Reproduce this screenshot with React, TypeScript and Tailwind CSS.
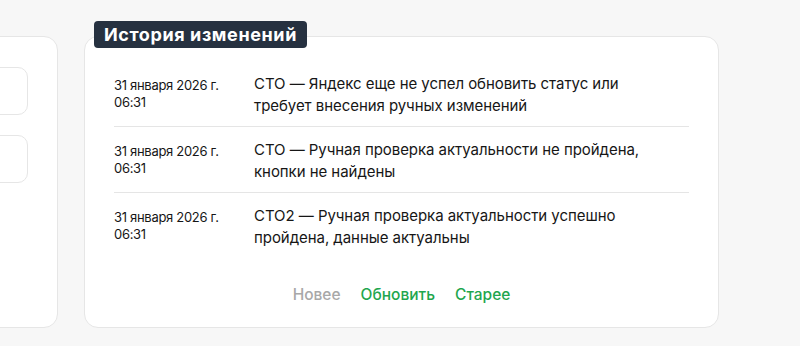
import React from 'react'

type Entry = {
  date: string
  time: string
  text: string
}

const entries: Entry[] = [
  {
    date: '31 января 2026 г.',
    time: '06:31',
    text: 'СТО — Яндекс еще не успел обновить статус или требует внесения ручных изменений',
  },
  {
    date: '31 января 2026 г.',
    time: '06:31',
    text: 'СТО — Ручная проверка актуальности не пройдена, кнопки не найдены',
  },
  {
    date: '31 января 2026 г.',
    time: '06:31',
    text: 'СТО2 — Ручная проверка актуальности успешно пройдена, данные актуальны',
  },
]

export default function App() {
  return (
    <div
      className="w-[800px] h-[346px] overflow-hidden bg-[#f7f7f7] text-[#161616] flex gap-[26px] pt-[36px]"
      style={{ fontFamily: 'Inter, "Noto Sans", sans-serif' }}
    >
      {/* Left settings card (cut off) */}
      <div className="ml-[-242px] w-[300px] h-[292px] shrink-0 bg-white border border-[#e6e6e6] rounded-[14px] pt-[30px] pl-[40px] flex flex-col gap-[20px]">
        <div className="w-[229px] h-[48px] border border-[#e6e6e6] rounded-[10px]" />
        <div className="w-[229px] h-[48px] border border-[#e6e6e6] rounded-[10px]" />
      </div>

      {/* History card */}
      <div className="relative w-[635px] h-[292px] shrink-0 bg-white border border-[#e6e6e6] rounded-[14px] pt-[24px] px-[29px] flex flex-col">
        <div className="absolute left-[9px] top-[-16px] h-[27px] px-[10px] bg-[#263140] rounded-[4px] flex items-center">
          <span className="text-white text-[18px] font-bold leading-none tracking-[0.6px]">
            История изменений
          </span>
        </div>

        <div className="flex flex-col">
          {entries.map((e, i) => (
            <div
              key={i}
              className={
                'flex pt-[12px] pb-[9px] ' +
                (i < entries.length - 1 ? 'border-b border-[#e5e5e5]' : '')
              }
            >
              <div className="w-[140px] shrink-0 mt-[4px] text-[13px] leading-[17px] tracking-[-0.3px]">
                <div>{e.date}</div>
                <div>{e.time}</div>
              </div>
              <p className="w-[400px] text-[15px] leading-[22px] tracking-[-0.05px]">{e.text}</p>
            </div>
          ))}
        </div>

        <div className="flex justify-center gap-5 mt-[26px] text-[15.5px] leading-[22px] font-medium">
          <button className="text-[#a8a8a8]">Новее</button>
          <button className="text-[#1fa64e]">Обновить</button>
          <button className="text-[#1fa64e]">Старее</button>
        </div>
      </div>
    </div>
  )
}
